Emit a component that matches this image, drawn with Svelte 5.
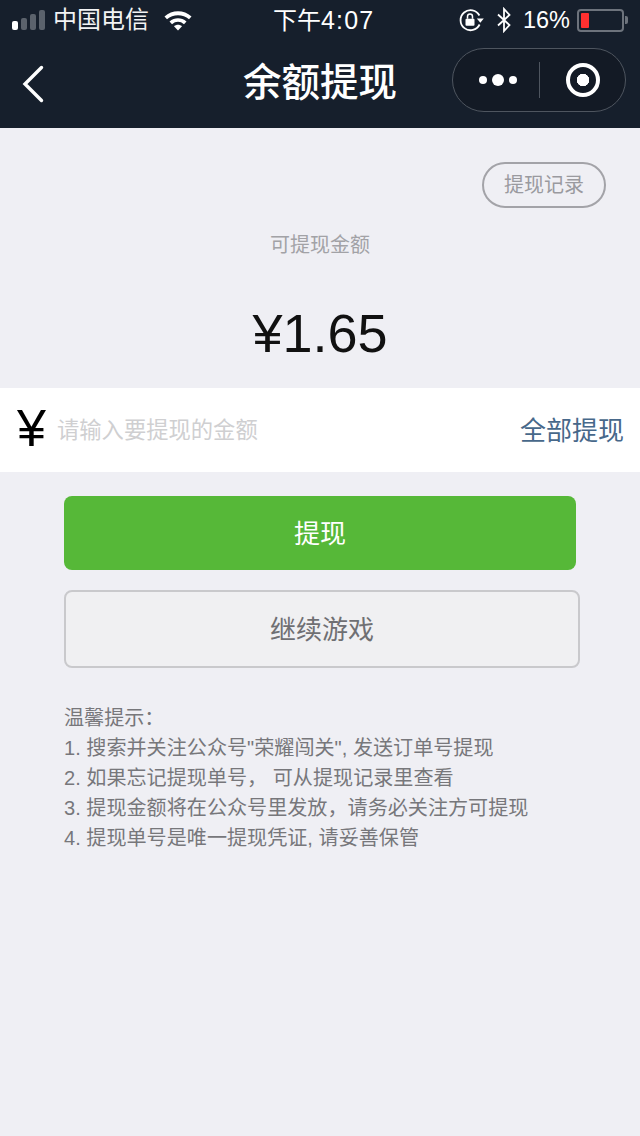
<script>
  const tips = [
    '温馨提示：',
    '1. 搜索并关注公众号"荣耀闯关", 发送订单号提现',
    '2. 如果忘记提现单号， 可从提现记录里查看',
    '3. 提现金额将在公众号里发放，请务必关注方可提现',
    '4. 提现单号是唯一提现凭证, 请妥善保管'
  ];
</script>

<div class="page">
  <header class="top">
    <div class="status">
      <div class="status-left">
        <span class="signal">
          <i></i><i></i><i></i><i></i>
        </span>
        <span class="carrier">中国电信</span>
        <svg class="wifi" width="30" height="22" viewBox="0 0 30 22">
          <path d="M1.500 7.500C9 .5 21 .5 28.500 7.500L26 10.200C20 4.800 10 4.800 4 10.200Z" fill="#fff"/>
          <path d="M6.500 12.600C11.500 8.200 18.500 8.200 23.500 12.600L21 15.300C17.200 12 12.800 12 9 15.300Z" fill="#fff"/>
          <path d="M11 17.200C13.400 15.200 16.600 15.200 19 17.200L15 21.400Z" fill="#fff"/>
        </svg>
      </div>
      <div class="time">下午<span>4:07</span></div>
      <div class="status-right">
        <svg class="lock" width="25" height="24" viewBox="0 0 25 24">
          <path d="M20.600 16.500A10 10 0 1 1 20.400 7.500" fill="none" stroke="#fff" stroke-width="1.800"/>
          <path d="M17.800 10.500h7l-3.500 4.200Z" fill="#fff"/>
          <rect x="6.500" y="10.800" width="9" height="7" rx="1" fill="#fff"/>
          <path d="M8.500 10.800V8.600a2.500 2.500 0 0 1 5 0v2.200" fill="none" stroke="#fff" stroke-width="1.500"/>
        </svg>
        <svg class="bt" width="16" height="26" viewBox="0 0 16 26">
          <path d="M2 7.500L13.500 18L8 24V2L13.500 8L2 18.500" fill="none" stroke="#fff" stroke-width="1.800"/>
        </svg>
        <span class="pct">16%</span>
        <span class="battery"><b></b></span>
        <span class="nub"></span>
      </div>
    </div>
    <div class="nav">
      <svg class="back" width="24" height="38" viewBox="0 0 24 38">
        <path d="M20.500 2.500L4 19L20.500 35.500" fill="none" stroke="#fff" stroke-width="3.400" stroke-linecap="round"/>
      </svg>
      <h1>余额提现</h1>
      <div class="capsule">
        <div class="dots"><i></i><i class="big"></i><i></i></div>
        <div class="rule"></div>
        <div class="target"><i></i></div>
      </div>
    </div>
  </header>

  <div class="record-row"><span class="record">提现记录</span></div>
  <div class="label">可提现金额</div>
  <div class="amount">¥1.65</div>

  <div class="input-row">
    <span class="yen">¥</span>
    <span class="placeholder">请输入要提现的金额</span>
    <span class="all">全部提现</span>
  </div>

  <div class="btn primary">提现</div>
  <div class="btn secondary">继续游戏</div>

  <div class="tips">
    {#each tips as t}
      <div>{t}</div>
    {/each}
  </div>
</div>

<style>
  :global(body) {
    margin: 0;
    background: #efeff4;
  }

  .page {
    width: 640px;
    height: 1136px;
    overflow: hidden;
    background: #efeff4;
    font-family: "Liberation Sans", "Noto Sans CJK SC", sans-serif;
  }

  .top {
    height: 128px;
    background: #161f2c;
    color: #fff;
  }

  .status {
    height: 40px;
    display: flex;
    align-items: center;
    justify-content: space-between;
    position: relative;
  }

  .status-left {
    display: flex;
    align-items: center;
    padding-left: 12px;
  }

  .signal {
    display: flex;
    align-items: flex-end;
    gap: 3px;
    width: 33px;
    height: 20px;
  }

  .signal i {
    width: 6px;
    background: #5b626c;
    border-radius: 2px;
  }

  .signal i:nth-child(1) { height: 9px; background: #fff; }
  .signal i:nth-child(2) { height: 12px; }
  .signal i:nth-child(3) { height: 16px; }
  .signal i:nth-child(4) { height: 20px; }

  .carrier {
    font-size: 24px;
    line-height: 28px;
    margin-left: 8px;
    color: #f2f3f4;
  }

  .wifi {
    margin-left: 14px;
  }

  .time {
    position: absolute;
    left: 273px;
    top: 4px;
    font-size: 24px;
    line-height: 32px;
    white-space: nowrap;
  }

  .time span {
    font-size: 25px;
    letter-spacing: 1.200px;
  }

  .status-right {
    display: flex;
    align-items: center;
    padding-right: 12px;
  }

  .lock { margin-right: 12px; }
  .bt { margin-right: 11px; }

  .pct {
    font-size: 23.500px;
    margin-right: 7px;
  }

  .battery {
    width: 47px;
    height: 23px;
    border: 2px solid #6d737c;
    border-radius: 4px;
    padding: 2px;
    box-sizing: border-box;
    display: flex;
  }

  .battery b {
    width: 8px;
    background: #ff3030;
    border-radius: 1px;
  }

  .nub {
    width: 3px;
    height: 8px;
    margin-left: 1px;
    background: #6d737c;
    border-radius: 0 2px 2px 0;
  }

  .nav {
    height: 88px;
    position: relative;
    display: flex;
    align-items: center;
    justify-content: center;
  }

  .back {
    position: absolute;
    left: 21px;
    top: 25px;
  }

  h1 {
    margin: -11px 0 0;
    font-size: 38.500px;
    font-weight: 500;
  }

  .capsule {
    position: absolute;
    left: 452px;
    top: 8px;
    width: 174px;
    height: 64px;
    box-sizing: border-box;
    border: 1px solid #4e555f;
    border-radius: 32px;
    display: flex;
    align-items: center;
    background: #131a25;
  }

  .dots {
    width: 86px;
    box-sizing: border-box;
    padding-left: 4px;
    display: flex;
    align-items: center;
    justify-content: center;
    gap: 5px;
  }

  .dots i {
    width: 8px;
    height: 8px;
    border-radius: 50%;
    background: #fff;
  }

  .dots .big {
    width: 12px;
    height: 12px;
  }

  .rule {
    width: 1px;
    height: 36px;
    background: #4e555f;
  }

  .target {
    flex: 1;
    display: flex;
    justify-content: center;
  }

  .target i {
    width: 34px;
    height: 34px;
    box-sizing: border-box;
    border: 4px solid #fff;
    border-radius: 50%;
    background: radial-gradient(circle, #fff 0 6px, transparent 6.500px);
  }

  .record-row {
    display: flex;
    justify-content: flex-end;
    padding: 34px 34px 0 0;
  }

  .record {
    width: 124px;
    height: 46px;
    box-sizing: border-box;
    border: 2px solid #a3a3a8;
    border-radius: 23px;
    padding-bottom: 3px;
    color: #9a9a9f;
    font-size: 20px;
    display: flex;
    align-items: center;
    justify-content: center;
  }

  .label {
    margin-top: 25px;
    text-align: center;
    font-size: 20px;
    line-height: 24px;
    color: #a2a2a6;
  }

  .amount {
    margin-top: 38px;
    text-align: center;
    font-size: 54px;
    line-height: 76px;
    color: #111;
    height: 93px;
  }

  .input-row {
    height: 84px;
    box-sizing: border-box;
    padding-bottom: 4px;
    background: #fff;
    display: flex;
    align-items: center;
  }

  .yen {
    font-size: 52px;
    font-weight: 500;
    width: 57px;
    text-align: center;
    padding-left: 6px;
    box-sizing: border-box;
    color: #000;
  }

  .placeholder {
    font-size: 22.300px;
    color: #cfcfd1;
    flex: 1;
  }

  .all {
    font-size: 26px;
    color: #47688a;
    padding-right: 16px;
  }

  .btn {
    box-sizing: border-box;
    display: flex;
    align-items: center;
    justify-content: center;
    margin-left: 64px;
    border-radius: 8px;
  }

  .primary {
    margin-top: 24px;
    width: 512px;
    height: 74px;
    background: #56b838;
    color: #fff;
    font-size: 26px;
    padding-bottom: 3px;
  }

  .secondary {
    margin-top: 20px;
    width: 516px;
    height: 78px;
    background: #f0f0f2;
    border: 2px solid #c9c9cc;
    color: #6f6f73;
    font-size: 26px;
    padding-bottom: 3px;
  }

  .tips {
    margin: 35px 0 0 64px;
    font-size: 20.100px;
    line-height: 30px;
    color: #77777b;
    white-space: pre;
  }
</style>
